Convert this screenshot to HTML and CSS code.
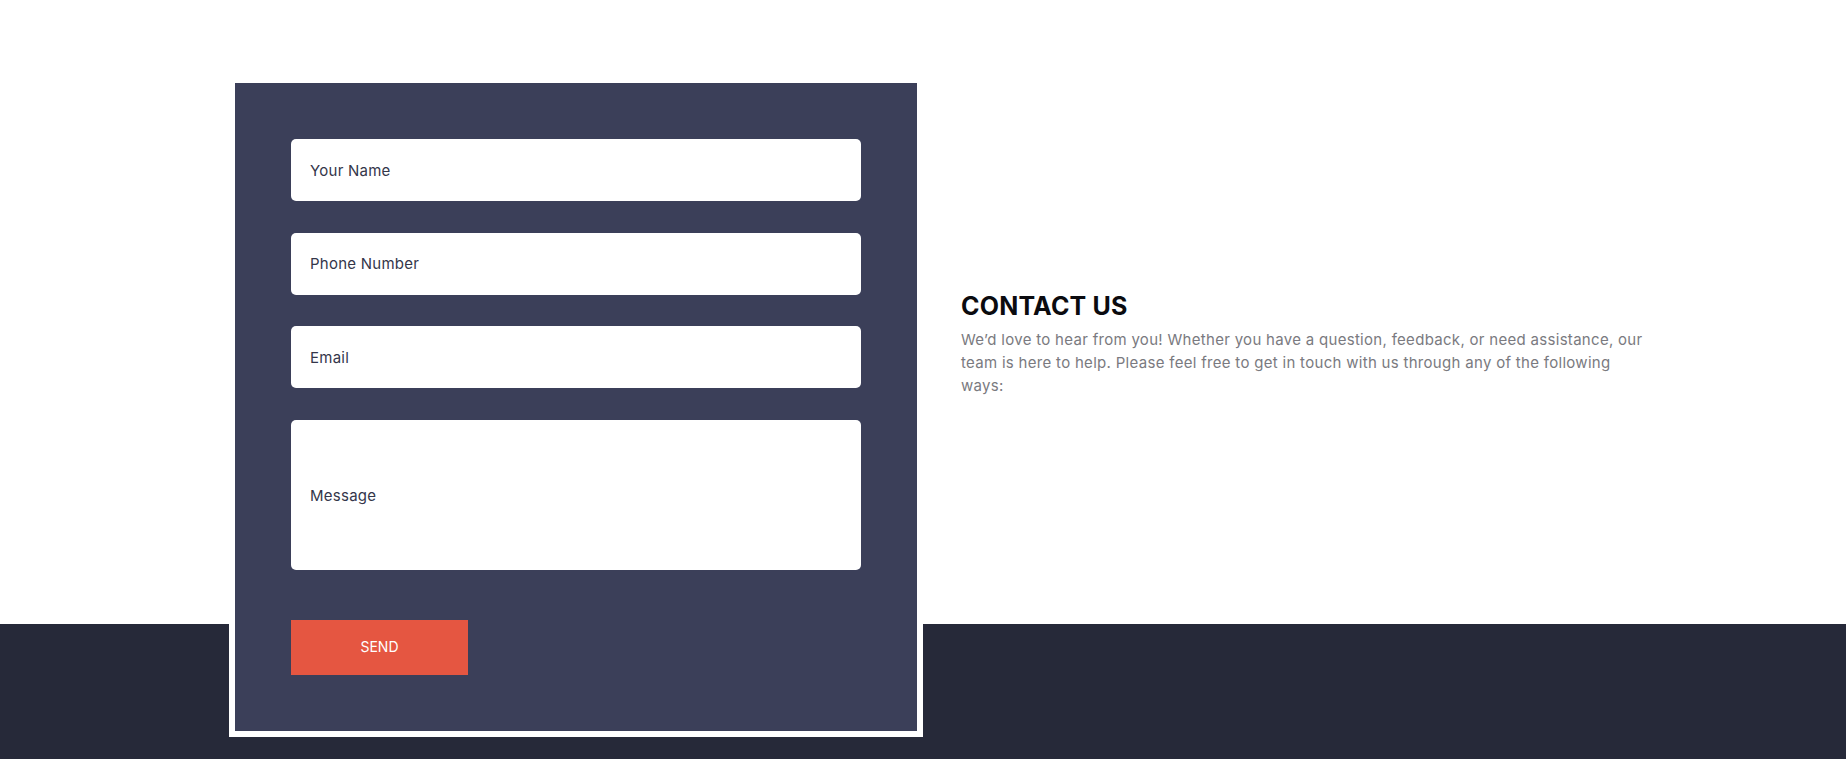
FILE: index.html
```html
<!DOCTYPE html>
<html lang="en">
<head>
<meta charset="utf-8">
<title>Contact Us</title>
<link rel="stylesheet" href="styles.css">
</head>
<body>
<section class="contact">
  <div class="contact-row">
    <form class="form-panel">
      <div class="field">Your Name</div>
      <div class="field">Phone Number</div>
      <div class="field">Email</div>
      <div class="field field-message">Message</div>
      <button type="button" class="send-btn">SEND</button>
    </form>
    <div class="contact-text">
      <h2 class="contact-title">CONTACT US</h2>
      <p class="contact-desc">We’d love to hear from you! Whether you have a question, feedback, or need assistance, our team is here to help. Please feel free to get in touch with us through any of the following ways:</p>
    </div>
  </div>
</section>
</body>
</html>
```

FILE: styles.css
```css
* { box-sizing: border-box; }
html, body { margin: 0; padding: 0; }
body {
  font-family: "Inter", "Noto Sans", sans-serif;
  background: #262939;
  height: 759px;
  overflow: hidden;
}
.contact {
  height: 759px;
  background: linear-gradient(#ffffff 0, #ffffff 624px, #262939 624px, #262939 100%);
}
.contact-row {
  display: flex;
  align-items: flex-start;
  padding: 77px 0 0 229px;
}
.form-panel {
  width: 694px;
  background: #3b3f59;
  border: 6px solid #ffffff;
  padding: 56px;
  display: flex;
  flex-direction: column;
  gap: 31.5px;
}
.field {
  height: 62px;
  background: #ffffff;
  border-radius: 5px;
  padding: 0 19px;
  display: flex;
  align-items: center;
  font-size: 15px;
  letter-spacing: 0.25px;
  color: #34364a;
}
.field-message {
  height: 150px;
  padding-top: 2px;
}
.send-btn {
  margin-top: 19px;
  width: 177px;
  height: 55px;
  background: #e55641;
  border: none;
  color: #ffffff;
  font-family: inherit;
  font-size: 14px;
  padding: 0 0 2px;
}
.contact-text {
  margin-left: 38px;
  margin-top: 213px;
  width: 695px;
}
.contact-title {
  margin: 0;
  font-size: 25px;
  line-height: 32px;
  font-weight: 700;
  color: #0b0b0f;
  letter-spacing: 0.2px;
}
.contact-desc {
  margin: 6px 0 0;
  font-size: 15px;
  letter-spacing: 0.3px;
  line-height: 23px;
  color: #7a7a80;
}
```
